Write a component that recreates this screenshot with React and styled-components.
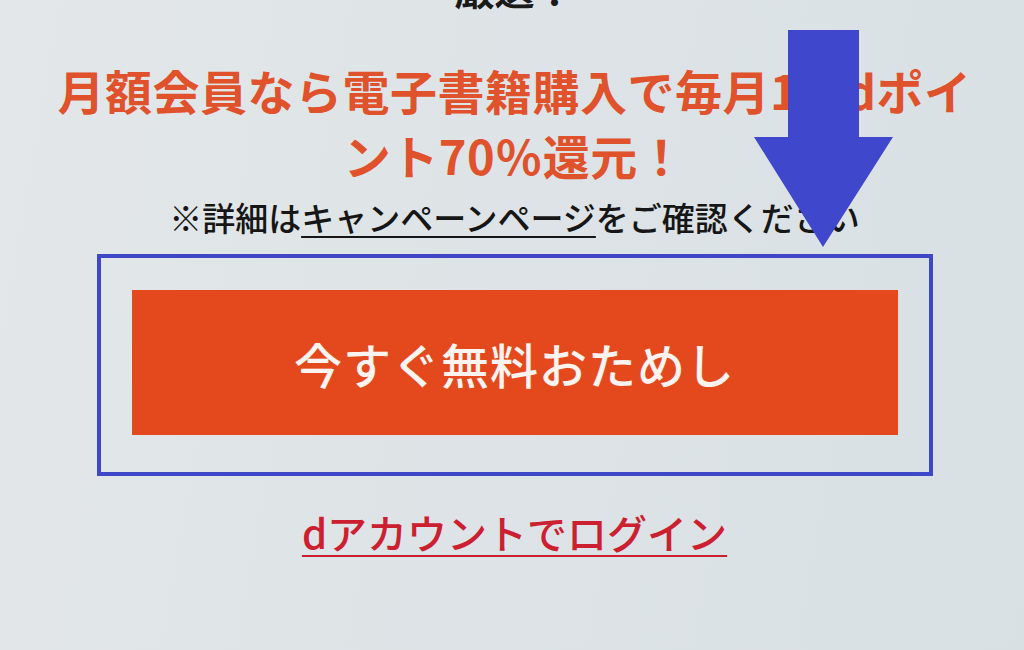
import styled, { createGlobalStyle } from "styled-components";

const GlobalStyle = createGlobalStyle`
  html, body {
    margin: 0;
    padding: 0;
    height: 100%;
    overflow: hidden;
  }
  body {
    background: linear-gradient(100deg, #e3e7e9 0%, #dde3e6 50%, #d9e0e3 100%);
    font-family: "Noto Sans CJK JP", "Noto Sans", sans-serif;
  }
`;

const Page = styled.div`
  position: relative;
  box-sizing: border-box;
  width: 1024px;
  height: 650px;
  padding-left: 5px;
  display: flex;
  flex-direction: column;
  align-items: center;
`;

const Headline = styled.div`
  margin-top: -36px;
  font-size: 40px;
  line-height: 48px;
  font-weight: 700;
  color: #1a1a1a;
`;

const Promo = styled.p`
  margin: 45px 0 0;
  font-size: 47px;
  line-height: 65px;
  font-weight: 700;
  letter-spacing: 0.5px;
  color: #e0522b;
  text-align: center;
`;

const Note = styled.p`
  margin: 10px 0 0;
  font-size: 33px;
  line-height: 40px;
  font-weight: 500;
  color: #161616;
`;

const Underlined = styled.span`
  text-decoration: underline;
  text-decoration-thickness: 2px;
  text-underline-offset: 5px;
`;

const Frame = styled.div`
  margin-top: 17px;
  width: 836px;
  box-sizing: border-box;
  border: 4px solid #3f47c9;
  padding: 32px 31px 37px;
`;

const CtaButton = styled.button`
  display: flex;
  align-items: center;
  justify-content: center;
  width: 100%;
  height: 145px;
  border: none;
  background: #e4491d;
  color: #fbf3ef;
  font-family: inherit;
  font-size: 48px;
  font-weight: 500;
  letter-spacing: 1px;
  cursor: pointer;
`;

const LoginLink = styled.a`
  margin-top: 32px;
  font-size: 40px;
  line-height: 48px;
  font-weight: 500;
  color: #cc2030;
  text-decoration: underline;
  text-decoration-thickness: 2px;
  text-underline-offset: 6px;
  cursor: pointer;
`;

const Arrow = styled.svg`
  position: absolute;
  left: 754px;
  top: 30px;
`;

const App = () => {
  return (
    <>
      <GlobalStyle />
      <Page>
        <Headline>厳選！</Headline>
        <Promo>
          月額会員なら電子書籍購入で毎月1冊dポイ
          <br />
          ント70％還元！
        </Promo>
        <Note>
          ※詳細は<Underlined>キャンペーンページ</Underlined>をご確認ください
        </Note>
        <Frame>
          <CtaButton>今すぐ無料おためし</CtaButton>
        </Frame>
        <LoginLink>dアカウントでログイン</LoginLink>
        <Arrow width="139" height="217" viewBox="0 0 139 217">
          <path d="M34 0 H105 V107 H139 L69 217 L0 107 H34 Z" fill="#3f47cc" />
        </Arrow>
      </Page>
    </>
  );
};

export default App;
